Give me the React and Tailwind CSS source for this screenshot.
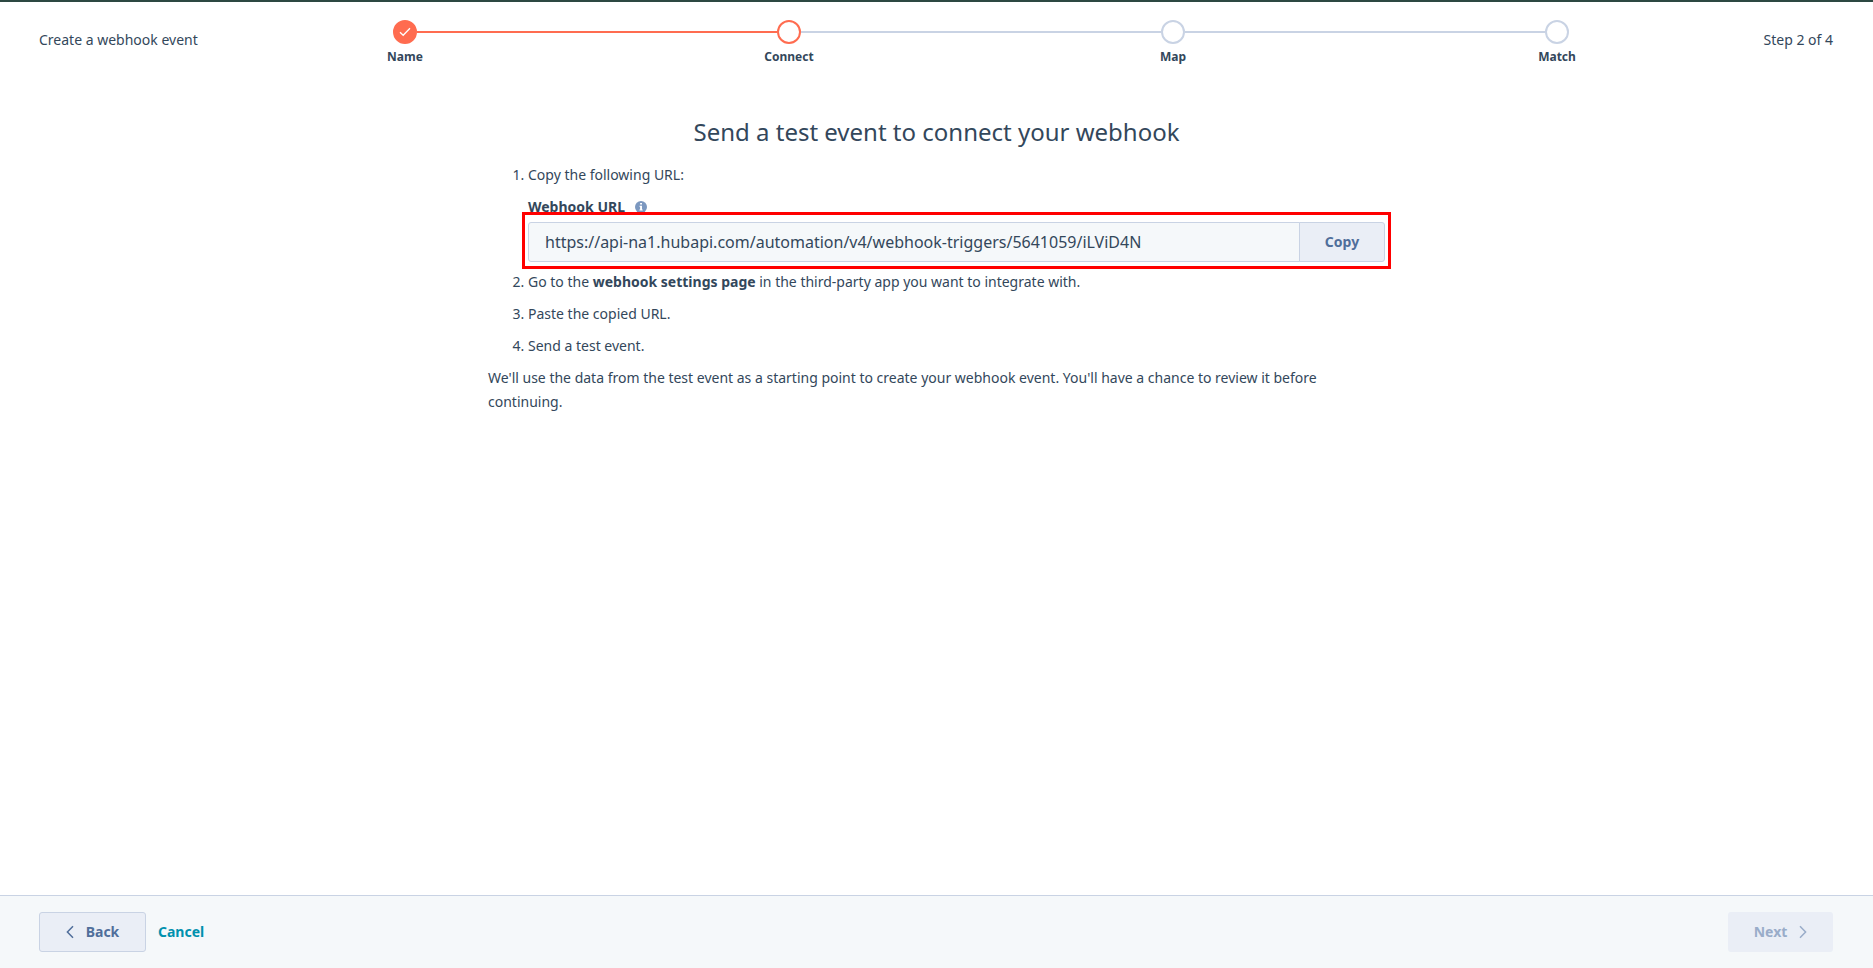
import { useState } from 'react'
import clsx from 'clsx'

const STEPS = ['Name', 'Connect', 'Map', 'Match']
const WEBHOOK_URL = 'https://api-na1.hubapi.com/automation/v4/webhook-triggers/5641059/iLViD4N'

function Step({ label, index, current }) {
    const done = index < current
    const active = index === current

    return (
        <li className="flex-1 flex flex-col items-center">
            <div className="w-full flex items-center">
                <span className={clsx('flex-1 h-[2px]', index > 0 && (index <= current ? 'bg-[#ff6c50]' : 'bg-[#c9d3e4]'))} />
                <span
                    className={clsx(
                        'flex items-center justify-center w-6 h-6 rounded-full border-2',
                        done && 'bg-[#ff6c50] border-[#ff6c50]',
                        active && 'bg-white border-[#ff6c50]',
                        !done && !active && 'bg-white border-[#c9d3e4]'
                    )}
                >
                    {done && (
                        <svg width="12" height="10" viewBox="0 0 12 10" fill="none" stroke="#fff" strokeWidth="1.3" aria-hidden="true">
                            <path d="M1 5.2 4.2 8.3 11 1.2" />
                        </svg>
                    )}
                </span>
                <span className={clsx('flex-1 h-[2px]', index < STEPS.length - 1 && (index < current ? 'bg-[#ff6c50]' : 'bg-[#c9d3e4]'))} />
            </div>
            <span className="mt-1 text-xs leading-[18px] font-bold">{label}</span>
        </li>
    )
}

function Chevron({ flip }) {
    return (
        <svg width="8" height="14" viewBox="0 0 8 14" fill="none" stroke="currentColor" strokeWidth="1.5" aria-hidden="true">
            <path d={flip ? 'M1 1.2 6.6 7 1 12.8' : 'M7 1.2 1.4 7 7 12.8'} />
        </svg>
    )
}

function InfoIcon() {
    return (
        <svg width="12" height="12" viewBox="0 0 12 12" aria-hidden="true">
            <circle cx="6" cy="6" r="6" fill="#7c98c0" />
            <path d="M5.1 2h1.9v1.6H5.1zM4.5 4.7H7v3.7h.7v1.1H4.4V8.4h.7V5.8h-.6z" fill="#fff" />
        </svg>
    )
}

export default function App() {
    const [url] = useState(WEBHOOK_URL)

    const handleCopy = () => {
        navigator.clipboard?.writeText(url)
    }

    return (
        <div className="min-h-screen flex flex-col bg-white border-t-2 border-[#2d4842] text-[#33475b] text-sm leading-6 font-['Noto_Sans','Open_Sans',sans-serif]">
            <header className="flex pl-[39px] pr-10 pt-[18px]">
                <p className="w-[174px] pt-2 whitespace-nowrap">Create a webhook event</p>
                <ol className="flex-1 flex">
                    {STEPS.map((label, i) => (
                        <Step key={label} label={label} index={i} current={1} />
                    ))}
                </ol>
                <p className="w-[84px] pt-2 text-right whitespace-nowrap">Step 2 of 4</p>
            </header>

            <main className="flex-1 w-full max-w-[897px] mx-auto pt-12">
                <h1 className="mb-[13px] text-2xl leading-9 text-center">Send a test event to connect your webhook</h1>
                <ol className="list-decimal pl-10">
                    <li>
                        Copy the following URL:
                        <div className="mt-2 flex items-center gap-2.5">
                            <label htmlFor="webhook-url" className="font-bold">Webhook URL</label>
                            <InfoIcon />
                        </div>
                        <div className="relative mt-[3px] mb-2 flex h-10">
                            <input
                                id="webhook-url"
                                type="text"
                                readOnly
                                value={url}
                                className="flex-1 min-w-0 px-4 text-base bg-[#f5f8fa] border border-[#c9d3e4] rounded-l-[3px] outline-none"
                            />
                            <button
                                type="button"
                                onClick={handleCopy}
                                className="w-[86px] -ml-px bg-[#eaeef6] border border-[#c9d3e4] rounded-r-[3px] text-[#506e9b] font-bold cursor-pointer"
                            >
                                Copy
                            </button>
                            <div className="absolute -top-2.5 -bottom-[7px] -inset-x-1.5 border-3 border-[#ff0000] pointer-events-none" />
                        </div>
                    </li>
                    <li className="mb-2">
                        Go to the <strong className="font-bold">webhook settings page</strong> in the third-party app you want to integrate with.
                    </li>
                    <li className="mb-2">Paste the copied URL.</li>
                    <li className="mb-2">Send a test event.</li>
                </ol>
                <p>
                    We'll use the data from the test event as a starting point to create your webhook event. You'll have a chance to review it before continuing.
                </p>
            </main>

            <footer className="flex items-center gap-3 pl-[39px] pr-10 py-4 bg-[#f5f8fa] border-t border-[#c9d3e4] font-bold">
                <button type="button" className="flex items-center justify-center gap-3 w-[107px] h-10 bg-[#eaeef6] border border-[#c9d3e4] rounded-[3px] text-[#506e9b] cursor-pointer">
                    <Chevron />
                    Back
                </button>
                <button type="button" className="text-[#0091ae] cursor-pointer">Cancel</button>
                <button type="button" disabled className="ml-auto flex items-center justify-center gap-3 w-[105px] h-10 bg-[#eaeef6] rounded-[3px] text-[#99acc9]">
                    Next
                    <Chevron flip />
                </button>
            </footer>
        </div>
    )
}
